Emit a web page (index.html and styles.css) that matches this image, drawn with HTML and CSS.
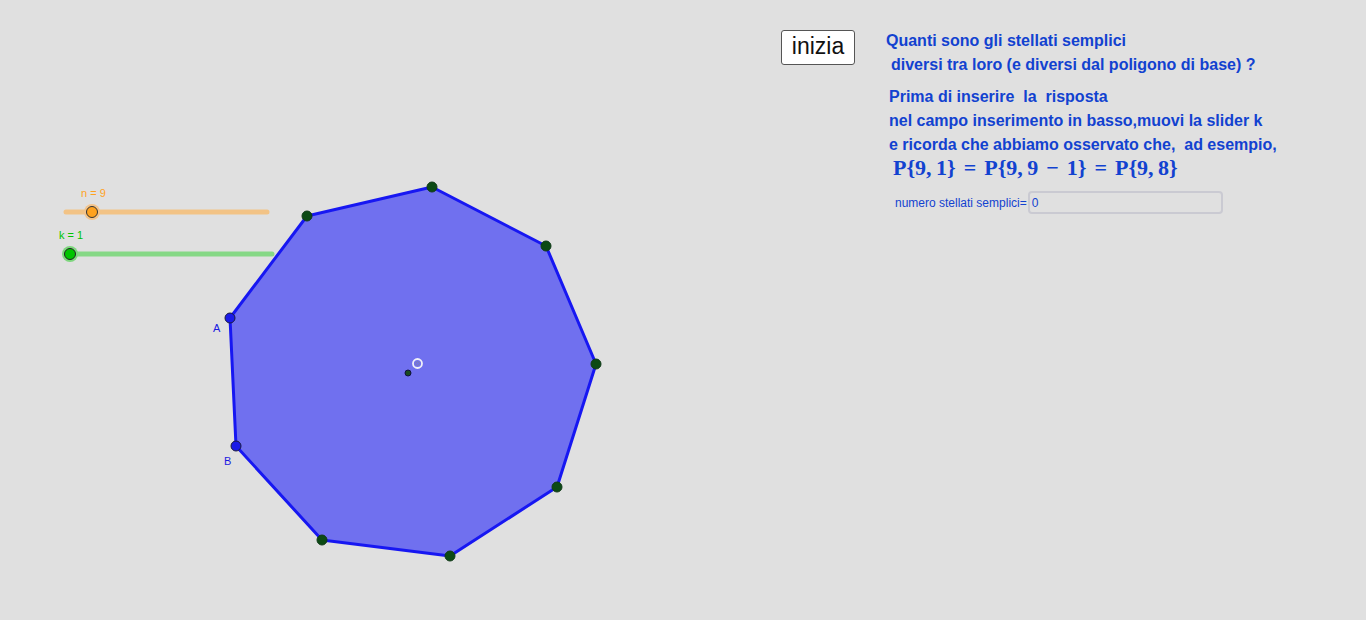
FILE: index.html
```html
<!DOCTYPE html>
<html lang="it">
<head>
<meta charset="utf-8">
<title>Stellati semplici</title>
<link rel="stylesheet" href="styles.css">
</head>
<body>
<div class="applet">
  <svg class="canvas" width="1366" height="620" viewBox="0 0 1366 620">
    <!-- sliders -->
    <line x1="66" y1="212" x2="267" y2="212" class="track-n"/>
    <circle cx="92" cy="212" r="8" class="halo-n"/>
    <circle cx="92" cy="212" r="5.5" class="knob-n"/>
    <text x="81" y="197" class="lbl-n">n = 9</text>

    <line x1="70" y1="254" x2="272" y2="254" class="track-k"/>
    <circle cx="70" cy="254" r="8" class="halo-k"/>
    <circle cx="70" cy="254" r="5.5" class="knob-k"/>
    <text x="59" y="239" class="lbl-k">k = 1</text>

    <!-- polygon -->
    <polygon class="poly" points="230,318 236,446 322,540 450,556 557,487 596,364 546,246 432,187 307,216"/>
    <g class="vtx">
      <circle cx="322" cy="540" r="5"/>
      <circle cx="450" cy="556" r="5"/>
      <circle cx="557" cy="487" r="5"/>
      <circle cx="596" cy="364" r="5"/>
      <circle cx="546" cy="246" r="5"/>
      <circle cx="432" cy="187" r="5"/>
      <circle cx="307" cy="216" r="5"/>
    </g>
    <g class="vtx-free">
      <circle cx="230" cy="318" r="5"/>
      <circle cx="236" cy="446" r="5"/>
    </g>
    <text x="213" y="332" class="lbl-pt">A</text>
    <text x="224" y="465" class="lbl-pt">B</text>

    <circle cx="408" cy="373" r="3" class="center"/>
    <circle cx="417.5" cy="363.5" r="4.5" class="ring"/>
    <circle cx="417.5" cy="363.5" r="1.8" class="ring-in"/>
  </svg>

  <button class="btn-inizia">inizia</button>

  <div class="txt txt-q">
    <p>Quanti sono gli stellati semplici</p>
    <p class="indent">diversi tra loro (e diversi dal poligono di base) ?</p>
  </div>

  <div class="txt txt-hint">
    <p>Prima di inserire&nbsp; la&nbsp; risposta</p>
    <p>nel campo inserimento in basso,muovi la slider k</p>
    <p>e ricorda che abbiamo osservato che,&nbsp; ad esempio,</p>
  </div>

  <div class="math">P{9,&thinsp;1} = P{9,&thinsp;9 − 1} = P{9,&thinsp;8}</div>

  <div class="field">
    <label class="field-lbl" for="num">numero stellati semplici=</label>
    <input id="num" class="field-in" type="text" value="0">
  </div>
</div>
</body>
</html>
```

FILE: styles.css
```css
html, body {
  margin: 0;
  padding: 0;
  background: #e0e0e0;
  overflow: hidden;
}
.applet {
  position: relative;
  width: 1366px;
  height: 620px;
  font-family: "Liberation Sans", Arial, sans-serif;
}
.canvas {
  position: absolute;
  left: 0;
  top: 0;
}
.track-n { stroke: #f2c386; stroke-width: 5; stroke-linecap: round; }
.halo-n { fill: #f3c48c; }
.knob-n { fill: #ffa21f; stroke: #333; stroke-width: 1; }
.lbl-n { fill: #ffa21f; font-family: "Liberation Sans", Arial, sans-serif; font-size: 11px; }
.track-k { stroke: #86d886; stroke-width: 5; stroke-linecap: round; }
.halo-k { fill: #7ed67e; }
.knob-k { fill: #00c400; stroke: #222; stroke-width: 1; }
.lbl-k { fill: #00c400; font-family: "Liberation Sans", Arial, sans-serif; font-size: 11px; }

.poly { fill: #7070ef; stroke: #1717f2; stroke-width: 3; stroke-linejoin: round; }
.vtx circle { fill: #0c4a14; stroke: #103a18; stroke-width: 1; }
.vtx-free circle { fill: #1a1ae8; stroke: #1a1a40; stroke-width: 1; }
.lbl-pt { fill: #1a1ae0; font-family: "Liberation Sans", Arial, sans-serif; font-size: 11px; }
.center { fill: #1a4a20; stroke: #101040; stroke-width: 1; }
.ring { fill: none; stroke: #f0f0f8; stroke-width: 1.8; }
.ring-in { fill: none; stroke: #8080a8; stroke-width: 1; }

.btn-inizia {
  position: absolute;
  left: 781px;
  top: 30px;
  width: 74px;
  height: 35px;
  padding: 0 0 2px;
  background: #fff;
  border: 1px solid #555;
  border-radius: 3px;
  font-family: "Liberation Sans", Arial, sans-serif;
  font-size: 23px;
  color: #111;
}

.txt {
  position: absolute;
  color: #1242d0;
  font-weight: bold;
  font-size: 16px;
  line-height: 24px;
}
.txt p { margin: 0; white-space: nowrap; }
.txt-q { left: 886px; top: 29px; }
.indent { padding-left: 5px; }
.txt-hint { left: 889px; top: 85px; }

.math {
  position: absolute;
  left: 893px;
  top: 155px;
  color: #1242d0;
  font-family: "Liberation Serif", "Times New Roman", serif;
  font-weight: bold;
  font-size: 22px;
  line-height: 26px;
  word-spacing: 2.5px;
  white-space: nowrap;
}

.field {
  position: absolute;
  left: 895px;
  top: 191px;
  display: flex;
  align-items: center;
}
.field-lbl {
  color: #1242d0;
  font-size: 12px;
}
.field-in {
  box-sizing: border-box;
  width: 195px;
  height: 23px;
  margin: 0 0 0 1px;
  padding: 0 2px;
  background: #e0e0e0;
  border: 2px solid #cacad2;
  border-radius: 4px;
  color: #1242d0;
  font-family: "Liberation Sans", Arial, sans-serif;
  font-size: 12px;
  outline: none;
}
```
